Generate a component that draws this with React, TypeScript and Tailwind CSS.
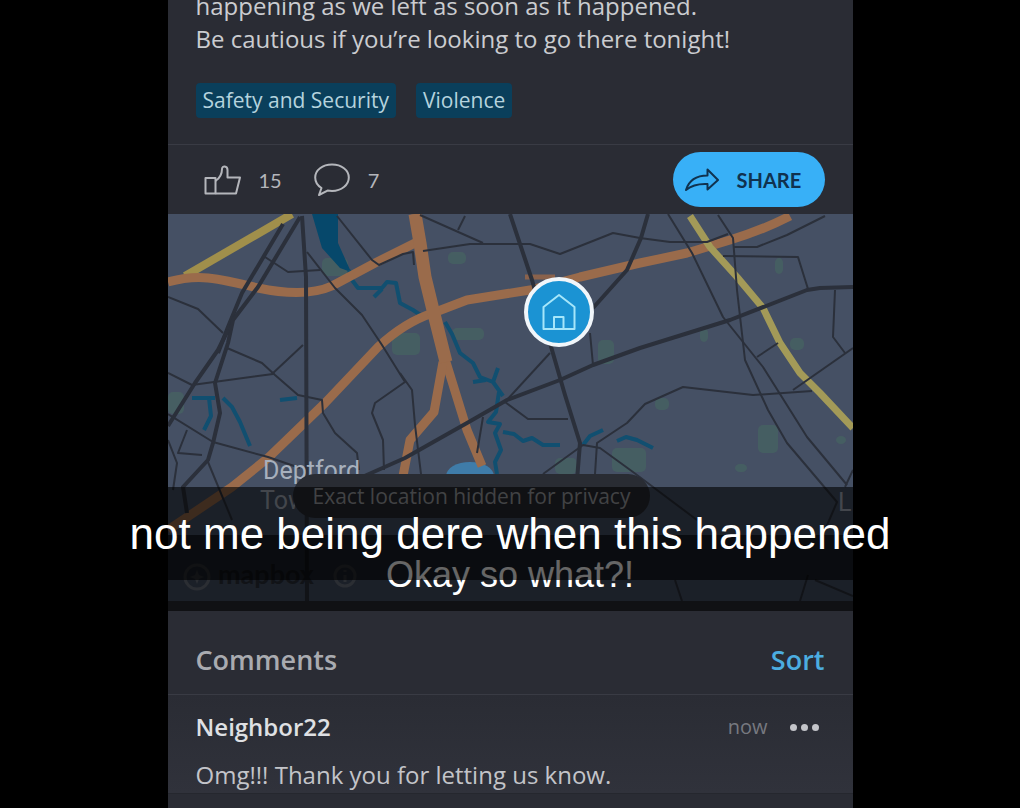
import type { ReactNode } from 'react';

const TAGS = ['Safety and Security', 'Violence'];

const MAIN_ROADS = [
  'M302 216 L306 277 L307 601',
  'M283 224 L242 293 L228 327 L218 353',
  'M300 217 L258 287 L233 320 L228 343 L215 383 L220 413 L213 443 L208 460 L183 487 L187 513',
  'M228 330 L218 350 L195 383 L178 410 L168 426',
  'M510 214 L532 280 L552 350 L565 395 L580 443 L577 480',
  'M360 478 L405 458 L467 423 L507 400 L560 380 L593 365 L640 348 L730 320 L807 290 L820 288 L853 287',
  'M648 214 L641 238 L627 270 L593 308',
];

const SIDE_ROADS = [
  'M265 257 L288 272 L320 270',
  'M307 252 L335 288 L362 315 L382 345 L405 382 L375 403 L372 413 L383 440 L384 470',
  'M337 216 L372 260 L379 265 L403 254 L413 252 L414 265',
  'M168 297 L198 309 L223 333',
  'M227 348 L262 363 L275 375 L298 395 L322 400 L323 413 L335 433 L357 453 L359 470',
  'M272 374 L303 345',
  'M168 373 L192 385 L273 374',
  'M168 414 L213 442 L268 457 L300 468',
  'M187 430 L178 453 L202 455',
  'M168 440 L177 463 L173 490',
  'M208 462 L232 520',
  'M505 402 L550 353',
  'M420 215 L483 243',
  'M465 216 L458 230',
  'M423 251 L470 244 L530 244 L560 254 L613 233 L640 238 L670 242 L707 242 L728 234',
  'M590 333 L593 365',
  'M400 373 L412 390 L415 425 L421 474',
  'M483 417 L477 453',
  'M505 402 L528 419 L568 419',
  'M543 474 L583 445 L600 448 L633 472 L697 520',
  'M595 474 L597 443 L627 423 L645 404 L683 387 L753 395 L812 391',
  'M668 214 L692 253 L723 317 L763 367 L807 437 L847 485',
  'M718 215 L733 238 L737 290 L745 360 L768 410 L787 443 L837 502 L825 530',
  'M825 216 L787 235 L757 247 L734 247',
  'M723 256 L798 257 L808 289',
  'M835 290 L833 337 L845 353',
  'M853 348 L793 390',
  'M757 357 L778 343',
  'M853 470 L845 487',
  'M675 580 L682 601',
  'M808 575 L800 601',
  'M815 580 L853 596',
];

const STREAMS = [
  'M349 270 L352 280 L358 288 L382 288 L387 282 L396 283 L400 303 L413 310 L422 316',
  'M445 322 L452 334 L460 353 L473 363 L480 377 L493 382 L503 396',
  'M498 368 L493 382',
  'M473 382 L486 380',
  'M382 289 L374 297',
  'M499 392 L496 412 L488 422 L500 424 L495 433 L501 450 L495 462 L497 474',
  'M503 432 L514 434 L523 441 L532 438 L543 445 L560 445',
  'M583 445 L590 436 L603 430',
  'M617 441 L626 437 L637 440 L653 448',
  'M192 398 L215 398',
  'M209 398 L211 416 L204 430',
  'M223 398 L232 407 L240 422 L250 446',
  'M280 400 L297 398',
];

const ORANGE_ROADS = [
  'M168 282 Q190 276 208 278 T258 288 Q305 298 332 286 L375 263 L415 243',
  'M415 214 L420 243 L425 277 L433 310 L446 362 L467 430 L482 466',
  'M443 362 L434 412 L410 440 L403 476',
  'M168 530 L232 487 L268 458 L325 403 L378 347 Q405 322 433 313 L467 300 L530 290 L580 277 L640 263 L687 253 L730 240 Q763 230 790 216',
];

const PARKS: [number, number, number, number][] = [
  [448, 252, 18, 12],
  [452, 328, 32, 12],
  [392, 333, 28, 22],
  [322, 258, 26, 18],
  [598, 340, 16, 24],
  [775, 258, 8, 16],
  [700, 328, 8, 14],
  [758, 425, 20, 28],
  [655, 398, 14, 12],
  [555, 458, 22, 16],
  [612, 448, 34, 24],
  [735, 464, 12, 8],
  [790, 338, 14, 12],
  [168, 392, 16, 22],
  [836, 436, 10, 8],
];

function NeighborhoodMap() {
  return (
    <svg
      className="block h-full w-full"
      viewBox="168 214 685 387"
      preserveAspectRatio="xMidYMid slice"
      role="img"
      aria-label="Map of Deptford"
    >
      <rect x="0" y="214" width="1020" height="387" fill="#455064" />
      <g fill="#466661" opacity="0.65">
        {PARKS.map(([x, y, w, h]) => (
          <rect key={`${x}-${y}`} x={x} y={y} width={w} height={h} rx="5" />
        ))}
      </g>
      <path d="M312 214 H338 L338 243 L351 272 L340 268 L322 248 Z" fill="#06486b" />
      <ellipse cx="470" cy="476" rx="24" ry="14" fill="#3f7ca9" />
      <g fill="none" stroke="#114f70" strokeWidth="4" strokeLinejoin="round">
        {STREAMS.map((d) => (
          <path key={d} d={d} />
        ))}
      </g>
      <g fill="none" strokeLinejoin="round">
        <path d="M292 214 L185 276" stroke="#a08f4b" strokeWidth="8" />
        {ORANGE_ROADS.map((d) => (
          <path key={d} d={d} stroke="#9a6b4b" strokeWidth="9" />
        ))}
        <path d="M415 214 L420 243 L425 277 L433 310 L446 362" stroke="#9a6b4b" strokeWidth="13" />
        <path d="M525 277 H555" stroke="#8a624c" strokeWidth="5" />
        <path d="M690 216 L710 247 L737 277 L763 308 L780 343 L800 373 L820 393 L853 428" stroke="#a39a58" strokeWidth="7" />
      </g>
      <g fill="none" stroke="#2b303b" strokeLinejoin="round">
        {MAIN_ROADS.map((d) => (
          <path key={d} d={d} strokeWidth="4" />
        ))}
        {SIDE_ROADS.map((d) => (
          <path key={d} d={d} strokeWidth="2" />
        ))}
      </g>
      <g fill="#a7b0bd" fontFamily="Roboto, sans-serif" fontSize="25">
        <text x="263" y="479">Deptford</text>
        <text x="260" y="509">Tow</text>
        <text x="838" y="511">L</text>
      </g>
      <g fill="none" stroke="#6b7380" strokeWidth="3">
        <circle cx="197" cy="577" r="12" />
        <circle cx="345" cy="576" r="10" />
      </g>
      <path d="M197 570 L199 575 L204 577 L199 579 L197 584 L195 579 L190 577 L195 575 Z" fill="#6b7380" />
      <path d="M345 570 V572 M345 575 V582" stroke="#6b7380" strokeWidth="3" />
      <text x="218" y="584" fill="#2b303b" fontFamily="Lato, sans-serif" fontSize="27" fontWeight="700">mapbox</text>
    </svg>
  );
}

function HomePin() {
  return (
    <svg className="absolute left-1/2 top-[63px] h-[70px] w-[70px] translate-x-[14px]" viewBox="0 0 70 70" fill="none" aria-hidden="true">
      <circle cx="35" cy="35" r="33" fill="#1b93d3" stroke="#f1f6fa" strokeWidth="4" />
      <g stroke="#a5e6fa" strokeWidth="2" strokeLinejoin="round">
        <path d="M19.500 30 L35 18 L50.500 30 V52 H19.500 Z" />
        <path d="M30 52 V40 H39.500 V52" />
      </g>
    </svg>
  );
}

function Reaction({ label, count, children }: { label: string; count: number; children: ReactNode }) {
  return (
    <button type="button" aria-label={label} className="flex items-center gap-[18px]">
      {children}
      <span className="font-['Lato',sans-serif] text-[20px] leading-6 text-[#b4b6bb]">{count}</span>
    </button>
  );
}

export default function App() {
  return (
    <div className="relative flex min-h-screen flex-col overflow-hidden bg-black font-['Open_Sans',sans-serif]">
      <main className="mx-auto flex w-full max-w-[685px] flex-1 flex-col bg-[#2a2c34]">
        <article>
          {/* scrolled post body, only the last lines are in view */}
          <div className="flex h-[145px] flex-col justify-end overflow-hidden border-b border-[#393b44] px-7 pb-[26px]">
            <p className="text-[24px] leading-[33px] text-[#cbccd0]">
              happening as we left as soon as it happened.
              <br />
              Be cautious if you’re looking to go there tonight!
            </p>
            <div className="mt-7 flex gap-5">
              {TAGS.map((tag) => (
                <span key={tag} className="rounded-sm bg-[#0a3f5b] px-[7px] text-[21px] leading-[35px] text-[#b5d3de]">
                  {tag}
                </span>
              ))}
            </div>
          </div>

          <div className="flex h-[69px] items-center justify-between pl-9 pr-7">
            <div className="flex items-center gap-8">
              <Reaction label="Like" count={15}>
                <svg className="h-[30px] w-[37px]" viewBox="0 0 37 30" fill="none" stroke="#b4b6bb" strokeWidth="2" strokeLinejoin="round">
                  <path d="M1.500 13 H11.500 V28.500 H1.500 Z" />
                  <path d="M11.500 16 C16 13 18 9 18 4 C18 0.500 23.500 0.500 23.500 5 V12.500 H36 L32 28.500 H11.500" />
                </svg>
              </Reaction>
              <Reaction label="Comments" count={7}>
                <svg className="h-[34px] w-[36px]" viewBox="0 0 36 34" fill="none" stroke="#b4b6bb" strokeWidth="2" strokeLinejoin="round">
                  <path d="M7.500 25 C3.500 22.500 1.200 19 1.200 14.500 C1.200 7 8.500 1.500 18 1.500 C27.500 1.500 34.800 7 34.800 14.500 C34.800 22 27.500 28 18 28 L13.500 27.600 L5 32 Z" />
                </svg>
              </Reaction>
            </div>
            <button type="button" className="flex h-[55px] w-[152px] items-center gap-[18px] rounded-full bg-[#38b0f7] pl-3 font-['Lato',sans-serif] text-[20px] font-bold text-[#10324f]">
              <svg className="h-[24px] w-[34px]" viewBox="0 0 34 24" fill="none" stroke="#10324f" strokeWidth="2" strokeLinejoin="round">
                <path d="M1 22 C4 12 12 7.500 22.500 7.500 V1.500 L33 12 L22.500 21.500 V16 C13 15.500 7 17 1 22 Z" />
              </svg>
              SHARE
            </button>
          </div>

          <div className="relative h-[387px] overflow-hidden">
            <NeighborhoodMap />
            <HomePin />
            <p className="absolute left-[125px] top-[260px] whitespace-nowrap rounded-full bg-[#292c33] px-5 text-[21px] leading-[44px] text-[#a3a5aa]">
              Exact location hidden for privacy
            </p>
          </div>
        </article>

        <section className="mt-[10px] flex flex-1 flex-col">
          <header className="flex h-[84px] items-center justify-between border-b border-[#393b44] px-7 pt-4 text-[27px] font-semibold">
            <h2 className="text-[#a9abb0]">Comments</h2>
            <button type="button" className="text-[#4cade0]">Sort</button>
          </header>
          <article className="h-[99px] border-b border-[#25272e] bg-linear-to-b from-[#2a2c34] to-[#30323b] px-7 pt-4">
            <div className="flex items-center justify-between">
              <h3 className="text-[24px] font-semibold leading-8 text-[#dfe0e3]">Neighbor22</h3>
              <div className="flex items-center gap-[22px] pr-[6px]">
                <time className="text-[20px] leading-8 text-[#777980]">now</time>
                <button type="button" aria-label="More options" className="flex gap-1">
                  <span className="h-[7px] w-[7px] rounded-full bg-[#c3c4c9]" />
                  <span className="h-[7px] w-[7px] rounded-full bg-[#c3c4c9]" />
                  <span className="h-[7px] w-[7px] rounded-full bg-[#c3c4c9]" />
                </button>
              </div>
            </div>
            <p className="mt-4 text-[24px] leading-8 text-[#c3c4c9]">Omg!!! Thank you for letting us know.</p>
          </article>
        </section>
      </main>

      {/* story captions laid over the post */}
      <p className="absolute inset-x-0 top-[535px] h-[76px] bg-black/60 text-center font-['Liberation_Sans',sans-serif] text-[36px] leading-[80px] text-white">
        Okay so what?!
      </p>
      <div className="absolute inset-x-0 top-[487px] h-[93px] bg-black/60" />
      <p className="absolute inset-x-0 top-[487px] text-center font-['Liberation_Sans',sans-serif] text-[44px] leading-[94px] text-white">
        not me being dere when this happened
      </p>
    </div>
  );
}
